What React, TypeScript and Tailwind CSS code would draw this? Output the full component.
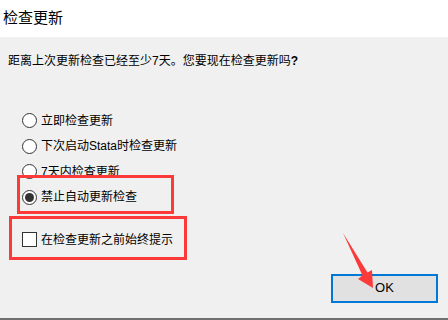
const options = [
  { label: "立即检查更新", checked: false },
  { label: "下次启动Stata时检查更新", checked: false },
  { label: "7天内检查更新", checked: false },
  { label: "禁止自动更新检查", checked: true },
];

const fontStack = "font-['Liberation_Sans','Noto_Sans_CJK_SC',sans-serif]";

function Radio({ checked }: { checked: boolean }) {
  return (
    <span className="flex h-[15px] w-[15px] shrink-0 items-center justify-center rounded-full border border-[#333333] bg-white">
      {checked ? <span className="h-[9px] w-[9px] rounded-full bg-[#333333]" /> : null}
    </span>
  );
}

export default function App() {
  return (
    <div className={`relative flex h-[320px] w-[448px] flex-col overflow-hidden ${fontStack}`}>
      <div className="flex h-[37px] items-center bg-white pl-[3px] text-[15px] text-black">
        检查更新
      </div>

      <div className="flex flex-1 flex-col border-b-2 border-[#707070] bg-[#f0f0f0] text-[12px] text-black">
        <p className="mt-[16px] pl-[8px] leading-[16px]">
          距离上次更新检查已经至少7天。您要现在检查更新吗<span className="font-bold">?</span>
        </p>

        <div className="mt-[39px] flex flex-col">
          {options.map((opt) => (
            <div key={opt.label} className="flex h-[25.5px] items-center gap-[4px] pl-[22px]">
              <Radio checked={opt.checked} />
              <span>{opt.label}</span>
            </div>
          ))}
        </div>

        <div className="mt-[17px] flex h-[25.5px] items-center gap-[4px] pl-[22px]">
          <span className="h-[15px] w-[15px] shrink-0 border border-[#333333] bg-white" />
          <span>在检查更新之前始终提示</span>
        </div>

        <div className="mt-[21px] flex justify-end pr-[10px]">
          <button
            type="button"
            className="flex h-[29px] w-[107px] items-center justify-center border-2 border-[#0078d7] bg-[#e1e1e1] text-[13px] font-normal text-black"
          >
            OK
          </button>
        </div>
      </div>

      {/* annotation overlays */}
      <div className="pointer-events-none absolute left-[17px] top-[175px] h-[39px] w-[157px] border-[3px] border-[#fc3a3a]" />
      <div className="pointer-events-none absolute left-[9px] top-[216px] h-[44px] w-[178px] border-[3px] border-[#fc3a3a]" />
      <svg className="pointer-events-none absolute left-0 top-0" width="448" height="320" viewBox="0 0 448 320">
        <polygon
          points="343,233 367.5,272.5 372,270 373,288 358,279 362.5,275.5"
          fill="#fc3a3a"
        />
      </svg>
    </div>
  );
}
